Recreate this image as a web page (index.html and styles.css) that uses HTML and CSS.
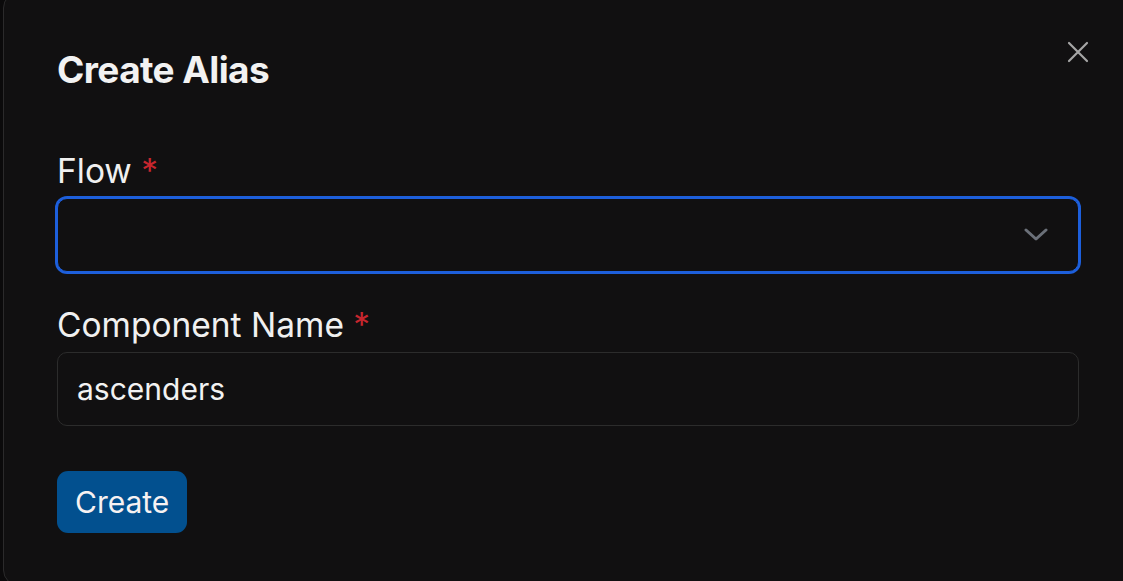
FILE: index.html
```html
<!DOCTYPE html>
<html lang="en">
<head>
  <meta charset="UTF-8" />
  <meta name="viewport" content="width=device-width, initial-scale=1.0" />
  <title>Create Alias</title>
  <link rel="stylesheet" href="styles.css">
</head>
<body>
  <div class="modal">
    <div class="modal-header">
      <h2>Create Alias</h2>
      <button class="close-btn" aria-label="Close">
        <svg width="22" height="22" viewBox="0 0 22 22" fill="none" stroke="#a6a6a6" stroke-width="2.2" stroke-linecap="round">
          <path d="M2 2L20 20M20 2L2 20" />
        </svg>
      </button>
    </div>
    <form class="modal-body">
      <div class="field">
        <label for="flow">Flow <span class="req">*</span></label>
        <div class="select-wrap">
          <select id="flow" class="select focused"></select>
          <svg class="chevron" width="24" height="14" viewBox="0 0 24 14" fill="none" stroke="#6b7079" stroke-width="3" stroke-linecap="round" stroke-linejoin="round">
            <path d="M2 2L12 11L22 2" />
          </svg>
        </div>
      </div>
      <div class="field">
        <label for="component">Component Name <span class="req">*</span></label>
        <input type="text" id="component" class="text-input" value="ascenders" />
      </div>
      <div class="actions">
        <button type="button" class="primary-btn">Create</button>
      </div>
    </form>
  </div>
</body>
</html>
```

FILE: styles.css
```css
* { box-sizing: border-box; }
html, body {
  height: 100%;
}
body {
  margin: 0;
  background-color: #0b0a0b;
  font-family: Inter, "Noto Sans", sans-serif;
  color: #f2f2f2;
  overflow: hidden;
}
.modal {
  margin: -8px -20px 0 3px;
  height: 594px;
  background-color: #111011;
  border: 1px solid #2b2a2b;
  border-radius: 16px;
  padding: 0 63px 0 53px;
}
.modal-header {
  display: flex;
  justify-content: space-between;
  align-items: flex-start;
  padding-top: 53px;
}
.modal-header h2 {
  margin: 0;
  font-size: 37px;
  font-weight: 700;
  line-height: 48px;
  letter-spacing: -0.6px;
}
.close-btn {
  background: none;
  border: none;
  padding: 0;
  margin: -5px -10px 0 0;
  cursor: pointer;
  display: flex;
}
.modal-body {
  margin-top: 57px;
  display: flex;
  flex-direction: column;
}
.field {
  display: flex;
  flex-direction: column;
  margin-bottom: 33px;
}
.field label {
  font-size: 33.5px;
  line-height: 40px;
  margin-bottom: 7px;
  color: #f0f0f0;
}
.req {
  color: #c6262e;
}
.select-wrap {
  position: relative;
}
.select {
  width: 100%;
  height: 74px;
  appearance: none;
  background-color: #111011;
  border: 1px solid #2c2c2c;
  border-radius: 10px;
  color: #f2f2f2;
  font-family: inherit;
  font-size: 30px;
}
.select.focused {
  border-color: #1d5fdc;
  box-shadow: 0 0 0 2px #1d5fdc;
  outline: none;
}
.chevron {
  position: absolute;
  right: 31px;
  top: 30px;
  pointer-events: none;
}
.text-input {
  width: 100%;
  height: 74px;
  background-color: #111011;
  border: 1px solid #2c2c2c;
  border-radius: 10px;
  padding: 0 19px;
  color: #f2f2f2;
  font-family: inherit;
  font-size: 30px;
}
.actions {
  margin-top: 12px;
}
.primary-btn {
  background-color: #02508f;
  color: #f7f2f2;
  border: none;
  border-radius: 11px;
  height: 62px;
  padding: 0 18px;
  font-family: inherit;
  font-size: 30px;
  cursor: pointer;
}
```
